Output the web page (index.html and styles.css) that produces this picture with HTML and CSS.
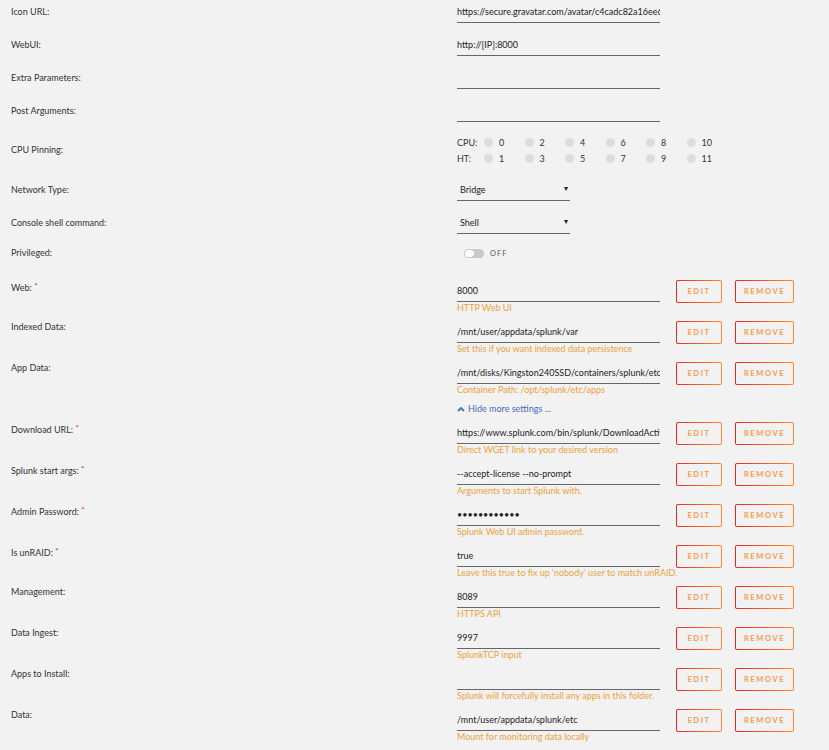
FILE: index.html
```html
<!DOCTYPE html>
<html lang="en">
<head>
    <meta charset="UTF-8">
    <title>Update Container</title>
    <link rel="stylesheet" href="styles.css">
</head>
<body>
    <div class="form">
        <!-- Basic settings -->
        <div class="row">
            <label class="label">Icon URL:</label>
            <input class="text" type="text" value="https://secure.gravatar.com/avatar/c4cadc82a16ee6b1b1f1e3b1c2d4">
        </div>
        <div class="row">
            <label class="label">WebUI:</label>
            <input class="text" type="text" value="http://[IP]:8000">
        </div>
        <div class="row">
            <label class="label">Extra Parameters:</label>
            <input class="text" type="text" value="">
        </div>
        <div class="row">
            <label class="label">Post Arguments:</label>
            <input class="text" type="text" value="">
        </div>

        <div class="row cpu-row">
            <label class="label">CPU Pinning:</label>
            <div class="cpu">
                <span class="cpu-name">CPU:</span>
                <label class="core"><input type="checkbox"><span>0</span></label>
                <label class="core"><input type="checkbox"><span>2</span></label>
                <label class="core"><input type="checkbox"><span>4</span></label>
                <label class="core"><input type="checkbox"><span>6</span></label>
                <label class="core"><input type="checkbox"><span>8</span></label>
                <label class="core"><input type="checkbox"><span>10</span></label>
                <span class="cpu-name">HT:</span>
                <label class="core"><input type="checkbox"><span>1</span></label>
                <label class="core"><input type="checkbox"><span>3</span></label>
                <label class="core"><input type="checkbox"><span>5</span></label>
                <label class="core"><input type="checkbox"><span>7</span></label>
                <label class="core"><input type="checkbox"><span>9</span></label>
                <label class="core"><input type="checkbox"><span>11</span></label>
            </div>
        </div>

        <div class="row">
            <label class="label">Network Type:</label>
            <div class="select">
                <select>
                    <option>Bridge</option>
                    <option>Host</option>
                    <option>None</option>
                </select>
                <span class="arrow">&#9662;</span>
            </div>
        </div>
        <div class="row">
            <label class="label">Console shell command:</label>
            <div class="select">
                <select>
                    <option>Shell</option>
                    <option>Bash</option>
                </select>
                <span class="arrow">&#9662;</span>
            </div>
        </div>
        <div class="row switch-row">
            <label class="label">Privileged:</label>
            <div class="switch">
                <span class="track"><span class="knob"></span></span>
                <span class="switch-text">OFF</span>
            </div>
        </div>

        <!-- Ports, paths and variables -->
        <div class="row item">
            <label class="label">Web: <span class="req">*</span></label>
            <div class="item-line">
                <div class="field">
                    <input class="text" type="text" value="8000">
                    <div class="help">HTTP Web UI</div>
                </div>
                <button class="btn edit">Edit</button>
                <button class="btn">Remove</button>
            </div>
        </div>
        <div class="row item">
            <label class="label">Indexed Data:</label>
            <div class="item-line">
                <div class="field">
                    <input class="text" type="text" value="/mnt/user/appdata/splunk/var">
                    <div class="help">Set this if you want indexed data persistence</div>
                </div>
                <button class="btn edit">Edit</button>
                <button class="btn">Remove</button>
            </div>
        </div>
        <div class="row item">
            <label class="label">App Data:</label>
            <div class="item-line">
                <div class="field">
                    <input class="text" type="text" value="/mnt/disks/Kingston240SSD/containers/splunk/etc/apps">
                    <div class="help">Container Path: /opt/splunk/etc/apps</div>
                </div>
                <button class="btn edit">Edit</button>
                <button class="btn">Remove</button>
            </div>
        </div>

        <div class="row more-row">
            <span></span>
            <a class="more" href="#">
                <svg width="8" height="6" viewBox="0 0 8 6"><polyline points="1,5 4,2 7,5" fill="none" stroke="#486dba" stroke-width="1.8"/></svg>
                Hide more settings ...
            </a>
        </div>

        <div class="row item">
            <label class="label">Download URL: <span class="req">*</span></label>
            <div class="item-line">
                <div class="field">
                    <input class="text" type="text" value="https://www.splunk.com/bin/splunk/DownloadActivityServlet">
                    <div class="help">Direct WGET link to your desired version</div>
                </div>
                <button class="btn edit">Edit</button>
                <button class="btn">Remove</button>
            </div>
        </div>
        <div class="row item">
            <label class="label">Splunk start args: <span class="req">*</span></label>
            <div class="item-line">
                <div class="field">
                    <input class="text" type="text" value="--accept-license --no-prompt">
                    <div class="help">Arguments to start Splunk with.</div>
                </div>
                <button class="btn edit">Edit</button>
                <button class="btn">Remove</button>
            </div>
        </div>
        <div class="row item">
            <label class="label">Admin Password: <span class="req">*</span></label>
            <div class="item-line">
                <div class="field">
                    <input class="text password" type="password" value="changeme1234">
                    <div class="help">Splunk Web UI admin password.</div>
                </div>
                <button class="btn edit">Edit</button>
                <button class="btn">Remove</button>
            </div>
        </div>
        <div class="row item">
            <label class="label">Is unRAID: <span class="req">*</span></label>
            <div class="item-line">
                <div class="field">
                    <input class="text" type="text" value="true">
                    <div class="help">Leave this true to fix up 'nobody' user to match unRAID.</div>
                </div>
                <button class="btn edit">Edit</button>
                <button class="btn">Remove</button>
            </div>
        </div>
        <div class="row item">
            <label class="label">Management:</label>
            <div class="item-line">
                <div class="field">
                    <input class="text" type="text" value="8089">
                    <div class="help">HTTPS API</div>
                </div>
                <button class="btn edit">Edit</button>
                <button class="btn">Remove</button>
            </div>
        </div>
        <div class="row item">
            <label class="label">Data Ingest:</label>
            <div class="item-line">
                <div class="field">
                    <input class="text" type="text" value="9997">
                    <div class="help">SplunkTCP input</div>
                </div>
                <button class="btn edit">Edit</button>
                <button class="btn">Remove</button>
            </div>
        </div>
        <div class="row item">
            <label class="label">Apps to Install:</label>
            <div class="item-line">
                <div class="field">
                    <input class="text" type="text" value="">
                    <div class="help">Splunk will forcefully install any apps in this folder.</div>
                </div>
                <button class="btn edit">Edit</button>
                <button class="btn">Remove</button>
            </div>
        </div>
        <div class="row item">
            <label class="label">Data:</label>
            <div class="item-line">
                <div class="field">
                    <input class="text" type="text" value="/mnt/user/appdata/splunk/etc">
                    <div class="help">Mount for monitoring data locally</div>
                </div>
                <button class="btn edit">Edit</button>
                <button class="btn">Remove</button>
            </div>
        </div>
    </div>
</body>
</html>
```

FILE: styles.css
```css
body {
    margin: 0;
    padding: 0 11px;
    background: #f2f2f2;
    font-family: Lato, sans-serif;
    font-size: 9px;
    color: #333;
    overflow: hidden;
}

.row {
    display: grid;
    grid-template-columns: 446px 1fr;
    margin-bottom: 10px;
}

.label {
    line-height: 23px;
}

/* Underlined text inputs */
.text {
    display: block;
    width: 203px;
    height: 23px;
    box-sizing: border-box;
    padding: 0;
    border: none;
    border-bottom: 1px solid #666;
    background: transparent;
    font-family: inherit;
    font-size: 9px;
    color: #222;
    outline: none;
}

.text.password {
    font-size: 9px;
    letter-spacing: 0;
    color: #222;
}

/* CPU pinning */
.cpu-row .label {
    line-height: 36px;
}

.cpu {
    display: grid;
    grid-template-columns: 27px repeat(6, 40.5px);
    grid-auto-rows: 16px;
    padding: 2px 0;
    align-items: center;
}

.core {
    display: flex;
    align-items: center;
}

.core input {
    appearance: none;
    -webkit-appearance: none;
    width: 9px;
    height: 9px;
    margin: 0 6px 0 0;
    border-radius: 50%;
    background: #ddd;
}

/* Selects */
.select {
    position: relative;
    width: 113px;
}

.select select {
    appearance: none;
    -webkit-appearance: none;
    display: block;
    width: 100%;
    height: 23px;
    padding: 0 0 0 3px;
    border: none;
    border-bottom: 1px solid #666;
    border-radius: 0;
    background: transparent;
    font-family: inherit;
    font-size: 9px;
    color: #222;
    outline: none;
}

.select .arrow {
    position: absolute;
    right: 2px;
    top: 5px;
    font-size: 8px;
    color: #222;
    pointer-events: none;
}

/* Privileged switch */
.switch-row {
    margin-bottom: 17px;
}

.switch-row .label {
    line-height: 18px;
}

.switch {
    display: flex;
    align-items: center;
    height: 18px;
    padding-left: 7px;
}

.track {
    display: block;
    width: 20px;
    height: 9px;
    box-sizing: border-box;
    border-radius: 5px;
    background: #c8c8c8;
    padding: 1px;
}

.knob {
    display: block;
    width: 9px;
    height: 7px;
    border-radius: 4px;
    background: #fff;
}

.switch-text {
    margin-left: 6px;
    font-size: 7.5px;
    letter-spacing: 1px;
    color: #555;
}

/* Ports / paths / variables */
.item {
    margin-bottom: 0;
    padding-bottom: 6px;
}

.item .label {
    line-height: 14px;
}

.req {
    color: #e22828;
    font-size: 8px;
    vertical-align: 2px;
}

.item-line {
    display: flex;
    align-items: flex-start;
}

.field {
    width: 203px;
    flex-shrink: 0;
}

.help {
    line-height: 12px;
    color: #eba23e;
    white-space: nowrap;
}

.btn {
    height: 23px;
    padding: 0;
    margin-top: 1px;
    border: 1.5px solid transparent;
    border-radius: 2px;
    background:
        linear-gradient(#f2f2f2, #f2f2f2) padding-box,
        linear-gradient(90deg, #e22828, #ff8c2f) border-box;
    font-family: inherit;
    font-size: 7.5px;
    font-weight: bold;
    letter-spacing: 1.6px;
    text-transform: uppercase;
    color: #f79a4f;
    width: 59px;
    flex-shrink: 0;
    cursor: pointer;
}

.btn.edit {
    width: 46px;
    margin-left: 16px;
    margin-right: 13px;
}

.more-row {
    margin-bottom: 6px;
}

.more {
    display: flex;
    align-items: center;
    gap: 3px;
    line-height: 13px;
    color: #486dba;
    text-decoration: none;
}
```
